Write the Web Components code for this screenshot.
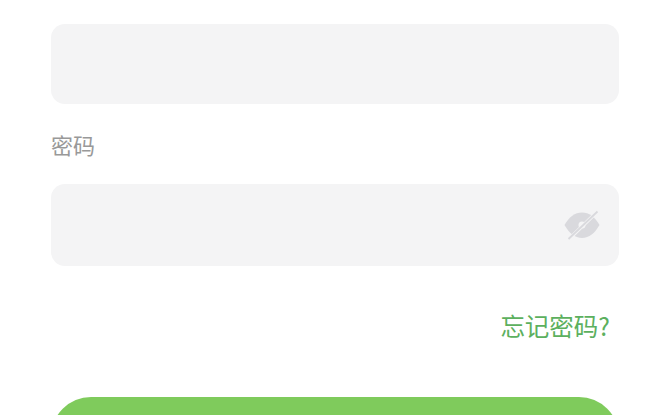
<!DOCTYPE html>
<html lang="zh"><head><meta charset="utf-8">
<style>
html,body{margin:0;padding:0;background:#fff;height:415px;overflow:hidden}
</style></head><body>
<login-form></login-form>
<script>
class TextField extends HTMLElement{
  constructor(){super();this.attachShadow({mode:'open'}).innerHTML=`<style>
  :host{display:flex;align-items:center;justify-content:flex-end;box-sizing:border-box;background:#f4f4f5;border-radius:14px;padding-right:19px;height:var(--h,80px)}
  </style><slot></slot>`;}
}
class EyeOff extends HTMLElement{
  constructor(){super();this.attachShadow({mode:'open'}).innerHTML=`<style>
  :host{display:block;width:36px;height:32px}svg{display:block}
  </style><svg width="36" height="32" viewBox="0 0 36 32">
  <path d="M0.500 16C5 8 11 3.500 18 3.500S31 8 35.500 16C31 24 25 29 18 29S5 24 .5 16Z" fill="#d9d9dd"/>
  <circle cx="18" cy="16" r="3.500" fill="#f4f4f5"/>
  <path d="M4 31 34 2" stroke="#f4f4f5" stroke-width="3.500"/>
  <path d="M4.500 30 33.500 2.500" stroke="#d9d9dd" stroke-width="1.800"/>
  </svg>`;}
}
class PrimaryButton extends HTMLElement{
  constructor(){super();this.attachShadow({mode:'open'}).innerHTML=`<style>
  :host{display:block;height:80px;background:#7fcb5c;border-radius:40px}
  </style><slot></slot>`;}
}
class LoginForm extends HTMLElement{
  constructor(){super();this.attachShadow({mode:'open'}).innerHTML=`<style>
  :host{display:flex;flex-direction:column;box-sizing:border-box;padding:24px 51px 0;font-family:"Noto Sans CJK SC","Noto Sans",sans-serif}
  .label{font-size:22px;line-height:32px;color:#999;margin:24px 0 24px}
  .link{align-self:flex-end;margin:43px 9px 0 0;font-size:24.500px;line-height:34px;color:#5cb05e}
  .btn{margin-top:54px}
  </style>
  <text-field></text-field>
  <div class="label">密码</div>
  <text-field style="--h:82px"><eye-off></eye-off></text-field>
  <div class="link">忘记密码?</div>
  <primary-button class="btn"></primary-button>`;}
}
customElements.define('text-field',TextField);
customElements.define('eye-off',EyeOff);
customElements.define('primary-button',PrimaryButton);
customElements.define('login-form',LoginForm);
</script></body></html>
